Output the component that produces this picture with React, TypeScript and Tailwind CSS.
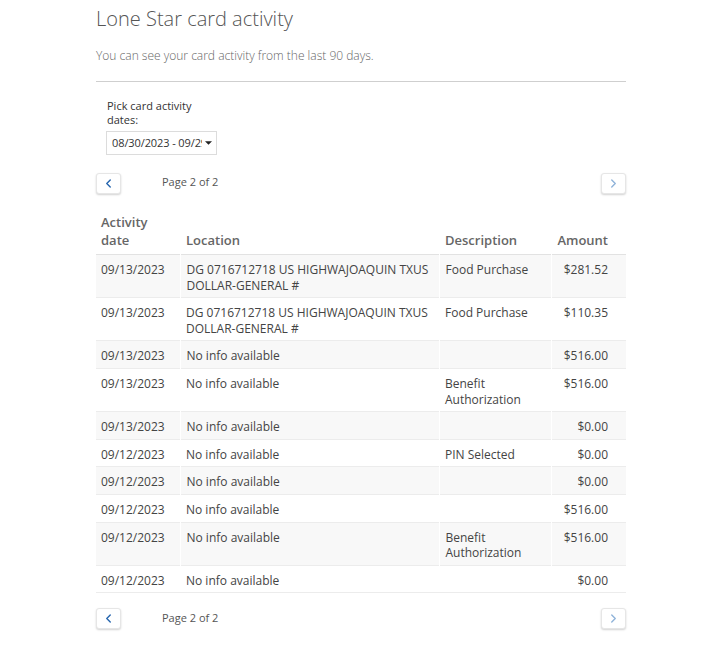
import React from 'react'

// ── Data ──────────────────────────────────────────────────────────────────────

interface Row {
  date: string
  location: string
  description: string
  amount: string
}

const DG = 'DG 0716712718 US HIGHWAJOAQUIN TXUS DOLLAR-GENERAL #'
const NA = 'No info available'

const rows: Row[] = [
  { date: '09/13/2023', location: DG, description: 'Food Purchase', amount: '$281.52' },
  { date: '09/13/2023', location: DG, description: 'Food Purchase', amount: '$110.35' },
  { date: '09/13/2023', location: NA, description: '', amount: '$516.00' },
  { date: '09/13/2023', location: NA, description: 'Benefit Authorization', amount: '$516.00' },
  { date: '09/13/2023', location: NA, description: '', amount: '$0.00' },
  { date: '09/12/2023', location: NA, description: 'PIN Selected', amount: '$0.00' },
  { date: '09/12/2023', location: NA, description: '', amount: '$0.00' },
  { date: '09/12/2023', location: NA, description: '', amount: '$516.00' },
  { date: '09/12/2023', location: NA, description: 'Benefit Authorization', amount: '$516.00' },
  { date: '09/12/2023', location: NA, description: '', amount: '$0.00' },
]

// ── Pieces ────────────────────────────────────────────────────────────────────

function PageButton({ dir }: { dir: 'prev' | 'next' }) {
  const disabled = dir === 'next'
  return (
    <button className="w-[25px] h-[21px] flex items-center justify-center rounded-[3px] border border-[#e6e6e6] bg-white shadow-[0_1px_2px_rgba(0,0,0,0.18)]">
      <svg
        viewBox="0 0 8 10"
        className="w-[7px] h-[9px]"
        fill="none"
        stroke={disabled ? '#8fb3d9' : '#2565ae'}
        strokeWidth="1.6"
      >
        {dir === 'prev' ? (
          <path d="M6 1L2 5l4 4" strokeLinecap="round" strokeLinejoin="round" />
        ) : (
          <path d="M2 1l4 4-4 4" strokeLinecap="round" strokeLinejoin="round" />
        )}
      </svg>
    </button>
  )
}

function Pager() {
  return (
    <div className="flex items-center justify-between">
      <div className="flex items-center">
        <PageButton dir="prev" />
        <span className="ml-[41px] -mt-[2px] text-[11px] text-[#555]">Page 2 of 2</span>
      </div>
      <PageButton dir="next" />
    </div>
  )
}

// ── App ───────────────────────────────────────────────────────────────────────

export default function App() {
  return (
    <div
      className="min-h-[663px] bg-white text-[#444]"
      style={{ fontFamily: '"Open Sans", "Liberation Sans", sans-serif' }}
    >
      <div className="w-[530px] ml-[96px] pt-[5px]">
        <h1 className="text-[20px] leading-[28px] font-light text-[#555]">
          Lone Star card activity
        </h1>
        <p className="mt-[15px] text-[12px] leading-[16px] font-light text-[#666]">
          You can see your card activity from the last 90 days.
        </p>
        <div className="mt-[17px] h-px bg-[#cfcfcf]" />

        {/* Date picker */}
        <div className="pl-[10px] pt-[17px]">
          <label className="block w-[100px] pl-px text-[11px] leading-[14px] text-[#333]">
            Pick card activity dates:
          </label>
          <div className="mt-[4px] w-[111px] h-[24px] border border-[#dcdcdc] flex items-center pl-[5px] pr-[4px] bg-white">
            <span className="flex-1 overflow-hidden whitespace-nowrap text-[11px] tracking-[-0.1px] text-[#333]">
              08/30/2023 - 09/29/2023
            </span>
            <svg viewBox="0 0 8 4" className="w-[7px] h-[4px] ml-[3px] shrink-0">
              <path d="M0 0h8L4 4z" fill="#222" />
            </svg>
          </div>
        </div>

        <div className="mt-[18px]">
          <Pager />
        </div>

        {/* Table */}
        <table className="mt-[19px] w-full border-collapse text-[12px] leading-[15.6px]">
          <thead>
            <tr className="border-b border-[#e2e2e2] text-[13px] leading-[18px] text-[#666] align-bottom">
              <th className="w-[84px] text-left font-semibold pl-[5px] pr-2 pb-[5px]">Activity date</th>
              <th className="w-[259px] text-left font-semibold pl-[6px] pb-[5px]">Location</th>
              <th className="w-[112px] text-left font-semibold pl-[6px] pb-[5px]">Description</th>
              <th className="text-right font-semibold pr-[18px] pb-[5px]">Amount</th>
            </tr>
          </thead>
          <tbody>
            {rows.map((r, i) => (
              <tr
                key={i}
                className={`border-b border-[#ececec] align-top ${i % 2 === 0 ? 'bg-[#f8f8f8]' : 'bg-white'}`}
              >
                <td className={`pl-[5px] pt-[7px] pb-[4px] ${i % 2 === 0 ? 'border-r border-white' : ''}`}>
                  {r.date}
                </td>
                <td className={`pl-[6px] pr-[10px] pt-[7px] pb-[4px] ${i % 2 === 0 ? 'border-r border-white' : ''}`}>
                  {r.location}
                </td>
                <td className={`pl-[6px] pr-[8px] pt-[7px] pb-[4px] ${i % 2 === 0 ? 'border-r border-white' : ''}`}>
                  {r.description}
                </td>
                <td className="text-right pr-[18px] pt-[7px] pb-[4px]">{r.amount}</td>
              </tr>
            ))}
          </tbody>
        </table>

        <div className="mt-[15px]">
          <Pager />
        </div>
      </div>
    </div>
  )
}
